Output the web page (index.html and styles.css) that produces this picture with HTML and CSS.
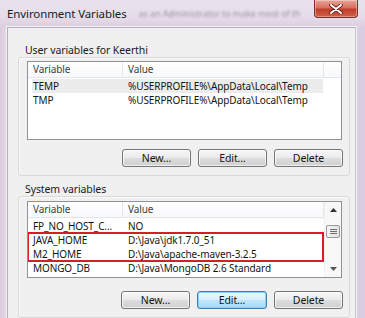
FILE: index.html
```html
<!DOCTYPE html>
<html>
<head>
<meta charset="utf-8">
<link rel="stylesheet" href="styles.css">
</head>
<body>
<div class="window">
  <div class="titlebar">
    <span class="title">Environment Variables</span>
    <span class="ghost">as an Administrator to make most of th</span>
    <div class="close">
      <svg width="16" height="10" viewBox="0 0 16 10">
        <path d="M3 1 L13 9 M13 1 L3 9" stroke="#5a1a14" stroke-width="3.6" stroke-linecap="round"/>
        <path d="M3 1 L13 9 M13 1 L3 9" stroke="#ffffff" stroke-width="2" stroke-linecap="round"/>
      </svg>
    </div>
  </div>
  <div class="client">
    <div class="group-label first">User variables for Keerthi</div>
    <div class="group">
      <div class="list list-user">
        <div class="list-main">
          <div class="head">
            <div class="h1">Variable</div>
            <div class="h2">Value</div>
            <div class="h3"></div>
          </div>
          <div class="row sel"><div class="c1">TEMP</div><div class="c2">%USERPROFILE%\AppData\Local\Temp</div></div>
          <div class="row"><div class="c1">TMP</div><div class="c2">%USERPROFILE%\AppData\Local\Temp</div></div>
        </div>
      </div>
      <div class="buttons">
        <div class="btn">New...</div>
        <div class="btn">Edit...</div>
        <div class="btn">Delete</div>
      </div>
    </div>
    <div class="group-label second">System variables</div>
    <div class="group">
      <div class="list list-sys">
        <div class="list-main">
          <div class="head">
            <div class="h1">Variable</div>
            <div class="h2">Value</div>
            <div class="h3"></div>
          </div>
          <div class="row"><div class="c1">FP_NO_HOST_C...</div><div class="c2">NO</div></div>
          <div class="mark">
            <div class="row"><div class="c1">JAVA_HOME</div><div class="c2">D:\Java\jdk1.7.0_51</div></div>
            <div class="row"><div class="c1">M2_HOME</div><div class="c2">D:\Java\apache-maven-3.2.5</div></div>
          </div>
          <div class="row"><div class="c1">MONGO_DB</div><div class="c2">D:\Java\MongoDB 2.6 Standard</div></div>
          <div class="row"><div class="c1">NUMBER_OF_P...</div><div class="c2">4</div></div>
        </div>
        <div class="scrollbar">
          <div class="sb-btn">
            <svg width="7" height="4" viewBox="0 0 7 4"><path d="M0 4 L3.5 0 L7 4 Z" fill="#333"/></svg>
          </div>
          <div class="sb-track">
            <div class="thumb"><i></i><i></i><i></i></div>
          </div>
          <div class="sb-btn">
            <svg width="7" height="4" viewBox="0 0 7 4"><path d="M0 0 L7 0 L3.5 4 Z" fill="#555"/></svg>
          </div>
        </div>
      </div>
      <div class="buttons">
        <div class="btn">New...</div>
        <div class="btn focus">Edit...</div>
        <div class="btn">Delete</div>
      </div>
    </div>
  </div>
</div>
</body>
</html>
```

FILE: styles.css
```css
html, body {
  margin: 0;
  padding: 0;
}
body {
  width: 365px;
  height: 318px;
  overflow: hidden;
  background: #d6c7da;
  font-family: "Noto Sans", "Open Sans", sans-serif;
  font-size: 10px;
  letter-spacing: -0.1px;
  color: #111;
}
.window {
  width: 365px;
  height: 318px;
  background: linear-gradient(90deg, #d9cbdc 0px, #e4dbe6 7px, #ebe6ec 60%, #d9cde0 100%);
}
.titlebar {
  height: 27px;
  display: flex;
  align-items: flex-start;
  background: linear-gradient(180deg, #e9e2ec 0%, #e6dde9 60%, #dccfe1 100%);
}
.title {
  margin: 6px 0 0 7px;
  font-size: 11.5px;
  letter-spacing: -0.1px;
  line-height: 16px;
  color: #1b1b1b;
  white-space: nowrap;
}
.ghost {
  margin: 8px 0 0 12px;
  font-size: 9px;
  line-height: 12px;
  color: rgba(70, 55, 85, 0.45);
  filter: blur(1.2px);
  white-space: nowrap;
  overflow: hidden;
  width: 172px;
}
.close {
  margin-left: auto;
  margin-right: 7px;
  width: 44px;
  height: 18px;
  box-sizing: border-box;
  border: 1px solid #7e2e25;
  border-top: none;
  border-radius: 0 0 4px 4px;
  background: linear-gradient(180deg, #e9a496 0%, #d8705f 45%, #c23c28 55%, #d0604a 100%);
  display: flex;
  align-items: center;
  justify-content: center;
  box-shadow: inset 0 0 0 1px rgba(255,255,255,0.35);
}
.client {
  margin-left: 7px;
  width: 349px;
  height: 300px;
  box-sizing: border-box;
  border: 1px solid #b7aebb;
  border-right-color: #c9c2cc;
  background: #f0f0f0;
  padding: 0 5px 0 10px;
  box-shadow: 0 0 0 1px #f4f1f5;
}
.group-label {
  padding-left: 7px;
  height: 14px;
  line-height: 14px;
  font-size: 10.5px;
  color: #1a1a1a;
}
.group-label.first {
  margin-top: 15px;
}
.group-label.second {
  margin-top: 6px;
}
.group {
  width: 332px;
  box-sizing: border-box;
  border: 1px solid #d9d9d9;
  border-radius: 3px;
  padding: 3px 7px 8px 8px;
  box-shadow: inset 1px 1px 0 #fbfbfb;
}
.group + .group-label + .group {
  padding-top: 4px;
}
.list {
  width: 315px;
  box-sizing: border-box;
  border: 1px solid #8f9296;
  background: #fff;
  display: flex;
  overflow: hidden;
}
.list-user {
  height: 79px;
}
.list-sys {
  height: 77px;
}
.list-main {
  flex: 1;
  min-width: 0;
}
.head {
  display: flex;
  height: 16px;
  box-sizing: border-box;
  border-bottom: 1px solid #e3e6ea;
  background: linear-gradient(180deg, #ffffff 0%, #f7f8fa 100%);
  line-height: 15px;
  color: #3b3f45;
}
.h1 {
  width: 95px;
  box-sizing: border-box;
  padding-left: 5px;
  border-right: 1px solid #e3e6ea;
}
.h2 {
  width: 201px;
  box-sizing: border-box;
  padding-left: 5px;
  border-right: 1px solid #e3e6ea;
}
.h3 {
  flex: 1;
}
.row {
  display: flex;
  height: 14px;
  line-height: 14px;
  margin-left: 4px;
  width: 291px;
  white-space: nowrap;
  color: #141414;
}
.row.sel {
  background: #ececec;
}
.c1 {
  width: 90px;
  padding-left: 1px;
  box-sizing: border-box;
}
.c2 {
  padding-left: 6px;
}
.head + .row {
  margin-top: 1px;
}
.mark {
  width: 295px;
  outline: 2px solid #d41f2b;
  outline-offset: -1px;
}
.scrollbar {
  width: 16px;
  display: flex;
  flex-direction: column;
  background: #f8f8f8;
  border-left: 1px solid #f0f0f0;
}
.sb-btn {
  height: 16px;
  display: flex;
  align-items: center;
  justify-content: center;
}
.sb-track {
  flex: 1;
  padding-top: 7px;
}
.thumb {
  margin: 0 1px;
  height: 13px;
  box-sizing: border-box;
  border: 1px solid #9a9a9a;
  border-radius: 2px;
  background: linear-gradient(90deg, #f4f4f4, #e3e3e3);
  display: flex;
  flex-direction: column;
  justify-content: center;
  align-items: center;
  gap: 1px;
}
.thumb i {
  display: block;
  width: 7px;
  height: 1px;
  background: #6f6f6f;
}
.buttons {
  display: flex;
  justify-content: flex-end;
  gap: 7px;
  margin-top: 9px;
  margin-right: -1px;
}
.group + .group-label + .group .buttons {
  margin-top: 13px;
}
.btn {
  width: 69px;
  height: 18px;
  box-sizing: border-box;
  border: 1px solid #757575;
  border-radius: 3px;
  background: linear-gradient(180deg, #f6f6f6 0%, #ebebeb 48%, #dddddd 52%, #cfcfcf 100%);
  box-shadow: inset 0 0 0 1px rgba(255,255,255,0.7);
  text-align: center;
  line-height: 16px;
  font-size: 10.5px;
  color: #151515;
}
.btn.focus {
  width: 70px;
  border-color: #3c7fb1;
  background: linear-gradient(180deg, #eaf6fd 0%, #d9f0fc 48%, #bee6fd 52%, #a7d9f5 100%);
  box-shadow: inset 0 0 0 1px #8fd0f3;
}
```
